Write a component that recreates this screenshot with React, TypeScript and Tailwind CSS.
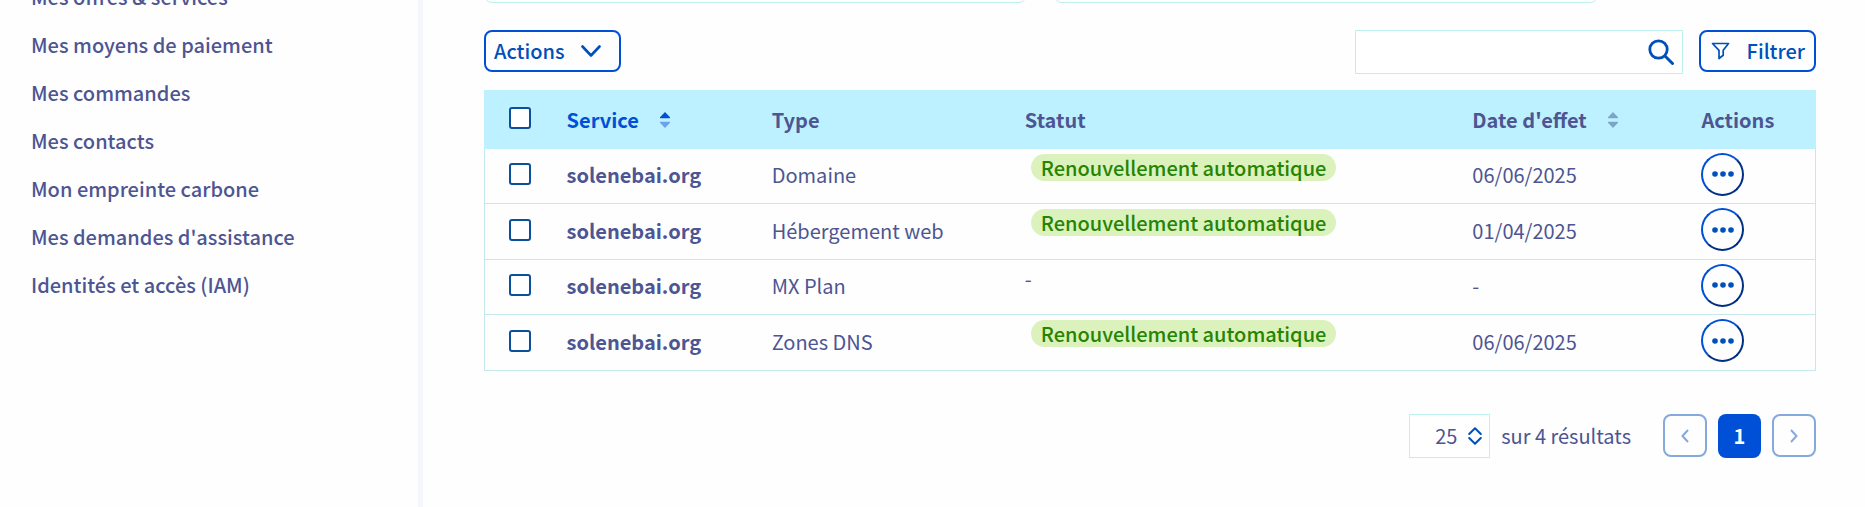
import { useState } from "react";

interface Service {
    id: number;
    name: string;
    type: string;
    status: string | null;
    date: string | null;
}

const MENU = [
    "Mes offres & services",
    "Mes moyens de paiement",
    "Mes commandes",
    "Mes contacts",
    "Mon empreinte carbone",
    "Mes demandes d'assistance",
    "Identités et accès (IAM)",
];

const SERVICES: Service[] = [
    { id: 1, name: "solenebai.org", type: "Domaine", status: "Renouvellement automatique", date: "06/06/2025" },
    { id: 2, name: "solenebai.org", type: "Hébergement web", status: "Renouvellement automatique", date: "01/04/2025" },
    { id: 3, name: "solenebai.org", type: "MX Plan", status: null, date: null },
    { id: 4, name: "solenebai.org", type: "Zones DNS", status: "Renouvellement automatique", date: "06/06/2025" },
];

function SortIcon({ active = false }: { active?: boolean }) {
    return (
        <svg viewBox="0 0 12 16" className="h-4 w-3" aria-hidden="true">
            <path d="M6 0 11 5.2Q11.4 6.2 10.4 6.2H1.6Q.6 6.2 1 5.2Z" fill={active ? "#0050d7" : "#7ba5c8"} />
            <path d="M6 16 11 10.8Q11.4 9.8 10.4 9.8H1.6Q.6 9.8 1 10.8Z" fill={active ? "#6aa2ee" : "#7ba5c8"} />
        </svg>
    );
}

function Checkbox({ label, checked, onChange }: { label: string; checked: boolean; onChange: () => void }) {
    return (
        <input
            type="checkbox"
            aria-label={label}
            checked={checked}
            onChange={onChange}
            className="block size-[22px] appearance-none rounded-[3px] border-2 border-[#0b509c] bg-white checked:bg-[#0050d7]"
        />
    );
}

export default function App() {
    const [selected, setSelected] = useState<number[]>([]);
    const [search, setSearch] = useState("");

    const toggle = (id: number) =>
        setSelected((prev) => (prev.includes(id) ? prev.filter((x) => x !== id) : [...prev, id]));

    const allSelected = selected.length === SERVICES.length;

    return (
        <div className="flex min-h-screen overflow-hidden bg-[#fefefe] font-['Noto_Sans_CJK_SC','Source_Sans_Pro',sans-serif] text-[20px] leading-7 text-[#4d5592]">
            {/* ── Sidebar ──────────────────────────────────────── */}
            <nav className="w-[423px] shrink-0 border-r-[5px] border-[#f5f5fc]">
                <ul className="-mt-[27px]">
                    {MENU.map((item) => (
                        <li key={item}>
                            <a href="#" className="flex h-12 items-center pl-[31px] font-medium">
                                {item}
                            </a>
                        </li>
                    ))}
                </ul>
            </nav>

            <main className="min-w-0 flex-1 pr-[49px] pl-[61px]">
                {/* ── Cards ────────────────────────────────────── */}
                <div className="-mt-[37px] flex gap-[27px]">
                    <div className="h-10 w-[40.8%] rounded-lg border border-[#bef1ee]" />
                    <div className="h-10 w-[40.8%] rounded-lg border border-[#bef1ee]" />
                </div>

                {/* ── Toolbar ──────────────────────────────────── */}
                <div className="mt-[27px] flex items-start justify-between">
                    <button className="flex h-[42px] items-center gap-4 rounded-lg border-2 border-[#0050d7] pr-[18px] pl-2 font-medium text-[#0050bb]">
                        Actions
                        <svg viewBox="0 0 20 12" className="h-3 w-5" fill="none" stroke="currentColor" strokeWidth="2.6" strokeLinecap="round" strokeLinejoin="round">
                            <path d="m1.5 1.5 8.5 9 8.5-9" />
                        </svg>
                    </button>

                    <div className="flex items-start gap-4">
                        <form className="flex h-11 w-[328px] border border-[#bef1ee] bg-white" onSubmit={(e) => e.preventDefault()}>
                            <input
                                type="text"
                                aria-label="Rechercher"
                                value={search}
                                onChange={(e) => setSearch(e.target.value)}
                                className="min-w-0 flex-1 px-3 outline-none"
                            />
                            <button type="submit" aria-label="Lancer la recherche" className="flex items-center pr-2 text-[#0050bb]">
                                <svg viewBox="0 0 26 26" className="size-[26px]" fill="none" stroke="currentColor" strokeLinecap="round">
                                    <circle cx="10.5" cy="10.5" r="8.7" strokeWidth="2.8" />
                                    <path d="m17 17 7.5 7.5" strokeWidth="3" />
                                </svg>
                            </button>
                        </form>
                        <button className="flex h-[42px] items-center gap-[17px] rounded-lg border-2 border-[#0050d7] pr-[9px] pl-[10px] font-medium text-[#0050bb]">
                            <svg viewBox="0 0 19 18" className="h-[18px] w-[19px]" fill="none" stroke="currentColor" strokeWidth="1.7" strokeLinejoin="round">
                                <path d="M1.5 1.5h16l-5.3 6.8v5L8 16.5V8.3Z" />
                            </svg>
                            Filtrer
                        </button>
                    </div>
                </div>

                {/* ── Services table ───────────────────────────── */}
                <table className="mt-4 w-full table-fixed border-separate border-spacing-0 text-left">
                    <thead className="bg-[#bef1ff]">
                        <tr className="h-[59px] *:p-0 *:font-bold">
                            <th className="w-[5%]">
                                <div className="-mt-1 pl-[25px]">
                                    <Checkbox
                                        label="Tout sélectionner"
                                        checked={allSelected}
                                        onChange={() => setSelected(allSelected ? [] : SERVICES.map((s) => s.id))}
                                    />
                                </div>
                            </th>
                            <th className="w-[15.4%]">
                                <button className="flex items-center gap-5 pl-4 text-[#0050d7]">
                                    Service <SortIcon active />
                                </button>
                            </th>
                            <th className="w-[19%]">
                                <div className="pl-4">Type</div>
                            </th>
                            <th className="w-[33.6%]">
                                <div className="pl-4">Statut</div>
                            </th>
                            <th className="w-[17.2%]">
                                <button className="flex items-center gap-5 pl-4">
                                    Date d'effet <SortIcon />
                                </button>
                            </th>
                            <th>
                                <div className="pl-4">Actions</div>
                            </th>
                        </tr>
                    </thead>
                    <tbody>
                        {SERVICES.map((service) => (
                            <tr
                                key={service.id}
                                className="h-[55px] *:border-b *:border-[#c5e9ea] *:p-0 *:pb-0.5 *:first:border-l *:last:border-r even:h-14"
                            >
                                <td>
                                    <div className="-mt-0.5 pl-6">
                                        <Checkbox
                                            label={`Sélectionner ${service.type}`}
                                            checked={selected.includes(service.id)}
                                            onChange={() => toggle(service.id)}
                                        />
                                    </div>
                                </td>
                                <td>
                                    <a href="#" className="pl-4 font-bold">
                                        {service.name}
                                    </a>
                                </td>
                                <td>
                                    <div className="pl-4">{service.type}</div>
                                </td>
                                <td className="align-top">
                                    {service.status ? (
                                        <span className="mt-[5px] ml-[22px] inline-block rounded-full bg-[#dbf2bd] px-[10px] align-top leading-[27px] font-medium whitespace-nowrap text-[#268403]">
                                            {service.status}
                                        </span>
                                    ) : (
                                        <div className="mt-[5px] pl-4 leading-[27px]">-</div>
                                    )}
                                </td>
                                <td>
                                    <div className="pl-4">{service.date ?? "-"}</div>
                                </td>
                                <td>
                                    <button
                                        aria-label={`Actions ${service.type}`}
                                        className="-mt-0.5 ml-4 flex size-[43px] items-center justify-center rounded-full border-2 border-[#0050d7] [border-style:outset]"
                                    >
                                        <svg viewBox="0 0 22 6" className="h-[6px] w-[22px]" fill="#0050bb">
                                            <circle cx="3" cy="3" r="2.8" />
                                            <circle cx="11" cy="3" r="2.8" />
                                            <circle cx="19" cy="3" r="2.8" />
                                        </svg>
                                    </button>
                                </td>
                            </tr>
                        ))}
                    </tbody>
                </table>

                {/* ── Pagination ───────────────────────────────── */}
                <div className="mt-[43px] flex items-start justify-end">
                    <div className="relative">
                        <select
                            aria-label="Résultats par page"
                            defaultValue="25"
                            className="h-11 w-[81px] appearance-none border border-[#bef1ee] bg-white pl-[25px] leading-7"
                        >
                            <option>10</option>
                            <option>25</option>
                            <option>50</option>
                        </select>
                        <svg viewBox="0 0 14 18" className="pointer-events-none absolute top-[13px] right-2 h-[18px] w-[14px]" fill="none" stroke="#0050bb" strokeWidth="2" strokeLinecap="round" strokeLinejoin="round">
                            <path d="m1.2 7 5.8-5.8L12.8 7M1.2 11 7 16.8l5.8-5.8" />
                        </svg>
                    </div>
                    <span className="ml-[11px] leading-[44px]">sur 4 résultats</span>
                    <div className="ml-8 flex gap-[11px] text-[#85a9dc]">
                        <button aria-label="Page précédente" className="flex h-[43px] w-11 items-center justify-center rounded-lg border-2 border-current">
                            <svg viewBox="0 0 8 14" className="h-[14px] w-2" fill="none" stroke="currentColor" strokeWidth="2">
                                <path d="M7 1 1.5 7 7 13" />
                            </svg>
                        </button>
                        <button className="h-11 w-[43px] rounded-lg bg-[#0050d7] font-bold text-white">1</button>
                        <button aria-label="Page suivante" className="flex h-[43px] w-11 items-center justify-center rounded-lg border-2 border-current">
                            <svg viewBox="0 0 8 14" className="h-[14px] w-2" fill="none" stroke="currentColor" strokeWidth="2">
                                <path d="M1 1l5.5 6L1 13" />
                            </svg>
                        </button>
                    </div>
                </div>
            </main>
        </div>
    );
}
